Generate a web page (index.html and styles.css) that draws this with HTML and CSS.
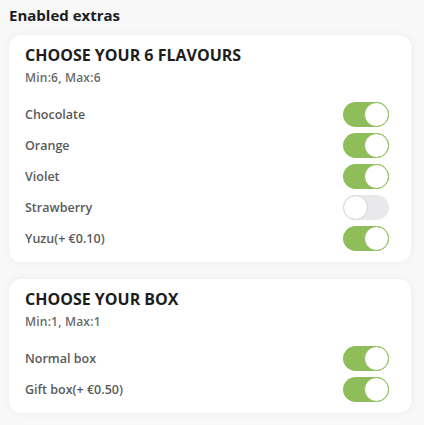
FILE: index.html
```html
<!DOCTYPE html>
<html lang="en">
  <head>
    <meta charset="utf-8" />
    <meta name="viewport" content="width=device-width, initial-scale=1" />
    <title>Enabled extras</title>
    <link rel="stylesheet" href="styles.css">
  </head>
  <body>
    <h2 class="heading">Enabled extras</h2>

    <div class="card">
        <h3 class="card-title">CHOOSE YOUR 6 FLAVOURS</h3>
        <p class="limits">Min:6, Max:6</p>
        <ul class="options">
            <li class="option"><span>Chocolate</span><label class="switch"><input type="checkbox" checked /><span class="knob"></span></label></li>
            <li class="option"><span>Orange</span><label class="switch"><input type="checkbox" checked /><span class="knob"></span></label></li>
            <li class="option"><span>Violet</span><label class="switch"><input type="checkbox" checked /><span class="knob"></span></label></li>
            <li class="option"><span>Strawberry</span><label class="switch"><input type="checkbox" /><span class="knob"></span></label></li>
            <li class="option"><span>Yuzu(+ €0.10)</span><label class="switch"><input type="checkbox" checked /><span class="knob"></span></label></li>
        </ul>
    </div>

    <div class="card">
        <h3 class="card-title">CHOOSE YOUR BOX</h3>
        <p class="limits">Min:1, Max:1</p>
        <ul class="options">
            <li class="option"><span>Normal box</span><label class="switch"><input type="checkbox" checked /><span class="knob"></span></label></li>
            <li class="option"><span>Gift box(+ €0.50)</span><label class="switch"><input type="checkbox" checked /><span class="knob"></span></label></li>
        </ul>
    </div>
  </body>
</html>
```

FILE: styles.css
```css
body{
    margin: 0;
    padding: 5px 13px 0 9px;
    background-color: #f8f8f8;
    font-family: "Open Sans", sans-serif;
    color: #1d1d1d;
}

.heading{
    margin: 0 0 10px 0;
    font-size: 15px;
    line-height: 20px;
    font-weight: 700;
}

.card{
    background-color: #fff;
    border-radius: 12px;
    box-shadow: 0 0 8px rgba(0,0,0,0.05);
    padding: 10px 22px 8px 16px;
    margin-bottom: 17px;
}

.card-title{
    margin: 0;
    font-size: 16px;
    line-height: 20px;
    font-weight: 700;
}

.limits{
    margin: 5px 0 13px 0;
    font-size: 12px;
    line-height: 16px;
    font-weight: 600;
    letter-spacing: 0.2px;
    color: #6b6b6b;
}

.options{
    list-style: none;
    margin: 0;
    padding: 0;
}

.option{
    display: flex;
    align-items: center;
    justify-content: space-between;
    height: 31px;
    font-size: 12.5px;
    font-weight: 600;
    color: #5a5a5a;
}

.switch{
    position: relative;
    width: 46px;
    height: 25px;
    cursor: pointer;
}

.switch input{
    display: none;
}

.knob{
    display: block;
    width: 100%;
    height: 100%;
    border-radius: 13px;
    background-color: #e9e9eb;
}

.knob::after{
    content: "";
    position: absolute;
    top: 0;
    left: 0;
    width: 25px;
    height: 25px;
    border-radius: 50%;
    background-color: #fff;
    border: 1px solid #d4d4d4;
    box-sizing: border-box;
}

.switch input:checked + .knob{
    background-color: #8fbd5a;
}

.switch input:checked + .knob::after{
    left: 21px;
    border-color: #8fbd5a;
}
```
